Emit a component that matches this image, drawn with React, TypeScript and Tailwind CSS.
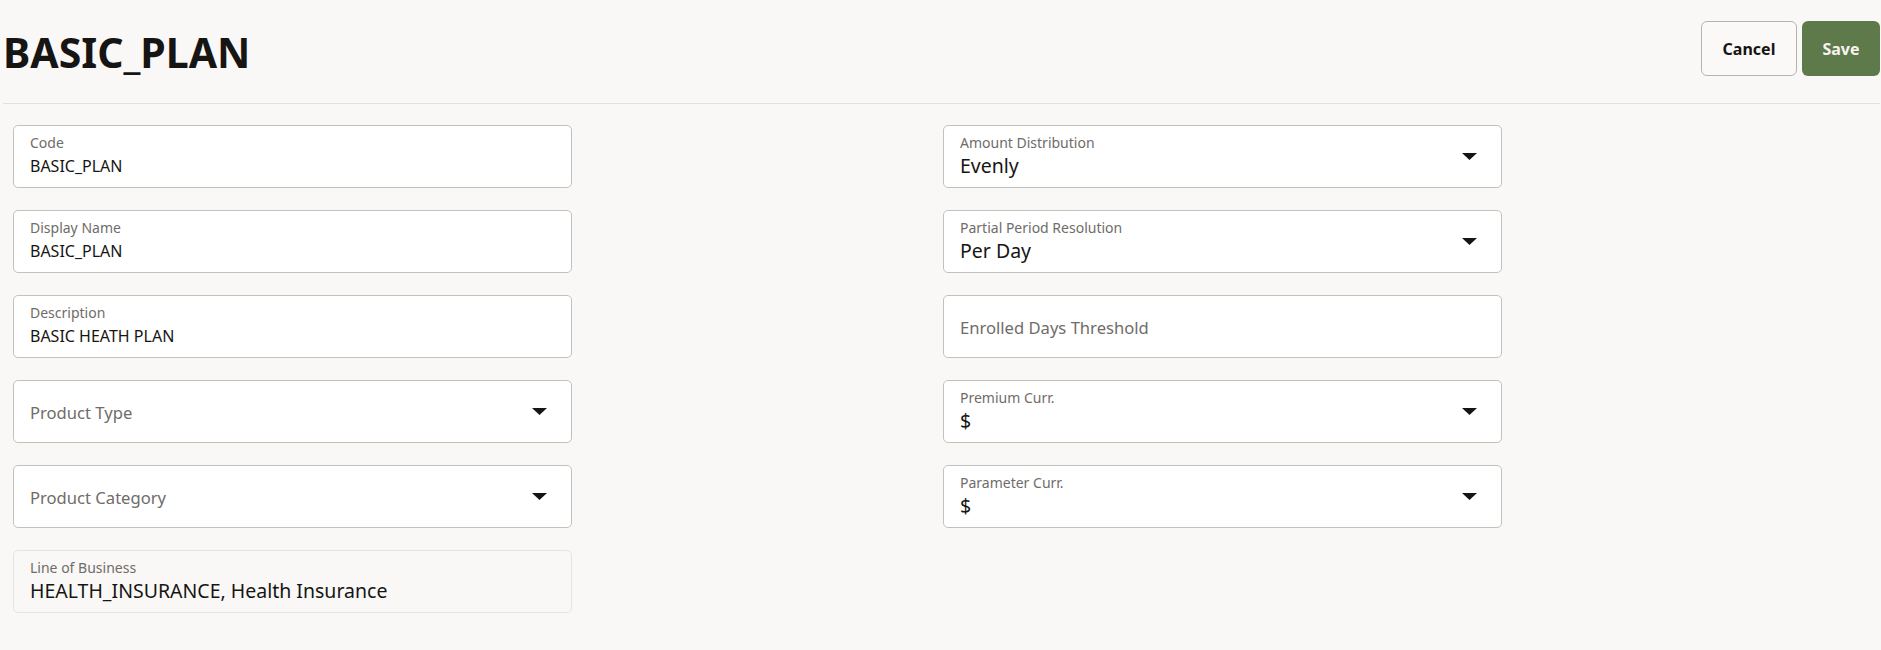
import React from "react";

const Caret = () => (
  <svg width="15" height="7" viewBox="0 0 15 7" className="shrink-0">
    <path d="M0 0 L15 0 L7.5 7 Z" fill="#161513" />
  </svg>
);

type FieldProps = {
  label: string;
  value?: string;
  select?: boolean;
  big?: boolean;
  disabled?: boolean;
};

const Field = ({ label, value, select, big, disabled }: FieldProps) => {
  const boxCls = disabled
    ? "w-[559px] h-[63px] rounded-[5px] border border-[#e6e4e1] bg-[#f9f8f6] flex items-center pl-4 pr-[24px]"
    : "w-[559px] h-[63px] rounded-[5px] border border-[#c4c1bd] bg-white flex items-center pl-4 pr-[24px]";
  return (
    <div className={boxCls}>
      <div className="flex-1 flex flex-col justify-center min-w-0">
        {value !== undefined ? (
          <>
            <div className="text-[14px] leading-[18px] text-[#6f6c69] -mt-[1px]">{label}</div>
            <div
              className={
                big
                  ? "text-[19.5px] leading-[26px] text-[#161513] mt-[1px]"
                  : "text-[16px] leading-[24px] text-[#161513] mt-[2px]"
              }
            >
              {value}
            </div>
          </>
        ) : (
          <div className="text-[16.6px] leading-[24px] text-[#6f6c69] pt-[2px]">{label}</div>
        )}
      </div>
      {select && <Caret />}
    </div>
  );
};

export default function App() {
  return (
    <div
      className="min-h-[650px] w-full bg-[#f9f8f6] text-[#161513]"
      style={{ fontFamily: '"Noto Sans", "Liberation Sans", sans-serif' }}
    >
      <div className="pl-[3px] pr-[1px]">
        <div className="h-[104px] flex items-center justify-between border-b border-[#e3e1de]">
          <h1 className="text-[41px] font-bold leading-none pt-[2px]">BASIC_PLAN</h1>
          <div className="flex items-center gap-[5px] pb-[6px]">
            <button className="h-[55px] w-[96px] rounded-[6px] border border-[#b6b3af] bg-[#faf9f8] text-[16px] font-bold text-[#161513]">
              Cancel
            </button>
            <button className="h-[55px] w-[78px] rounded-[6px] bg-[#5f7a4a] text-[16px] font-bold text-[#f5f4f2]">
              Save
            </button>
          </div>
        </div>
      </div>
      <div className="grid grid-cols-[930px_930px] pl-[13px] pt-[21px]">
        <div className="flex flex-col gap-[22px]">
          <Field label="Code" value="BASIC_PLAN" />
          <Field label="Display Name" value="BASIC_PLAN" />
          <Field label="Description" value="BASIC HEATH PLAN" />
          <Field label="Product Type" select />
          <Field label="Product Category" select />
          <Field label="Line of Business" value="HEALTH_INSURANCE, Health Insurance" big disabled />
        </div>
        <div className="flex flex-col gap-[22px]">
          <Field label="Amount Distribution" value="Evenly" select big />
          <Field label="Partial Period Resolution" value="Per Day" select big />
          <Field label="Enrolled Days Threshold" />
          <Field label="Premium Curr." value="$" select big />
          <Field label="Parameter Curr." value="$" select big />
        </div>
      </div>
    </div>
  );
}
